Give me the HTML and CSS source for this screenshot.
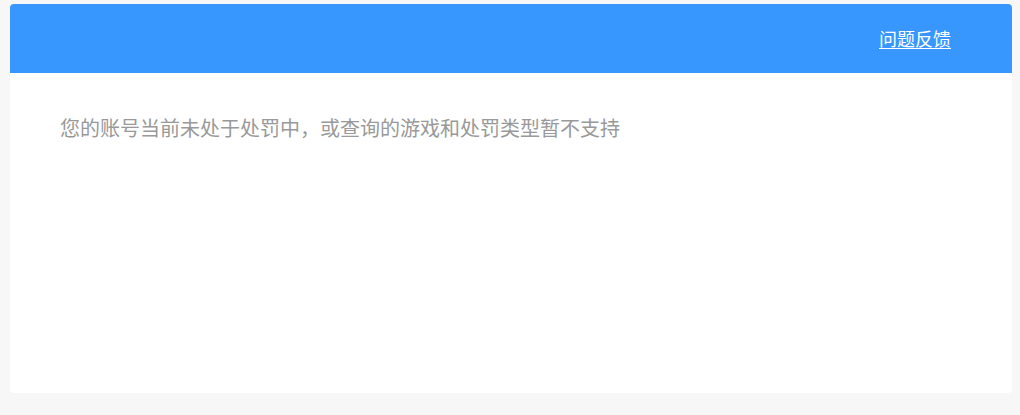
FILE: index.html
```html
<!DOCTYPE html>
<html lang="zh-CN">
<head>
<meta charset="utf-8">
<title>处罚查询</title>
<link rel="stylesheet" href="styles.css">
</head>
<body>
<div class="card">
  <div class="card-header">
    <a class="feedback" href="#">问题反馈</a>
  </div>
  <div class="card-body">
    <p class="notice">您的账号当前未处于处罚中，或查询的游戏和处罚类型暂不支持</p>
  </div>
</div>
</body>
</html>
```
FILE: styles.css
```css
html, body {
  margin: 0;
  padding: 0;
  background: #f7f7f7;
}
body {
  padding: 4px 8px 0 10px;
  font-family: "Noto Sans CJK SC", "Noto Sans", sans-serif;
}
.card {
  background: #ffffff;
  border-radius: 4px;
  height: 389px;
  overflow: hidden;
  display: flex;
  flex-direction: column;
}
.card-header {
  height: 69px;
  background: #3797ff;
  display: flex;
  align-items: center;
  justify-content: flex-end;
  padding: 0 61px 2px;
  box-sizing: border-box;
}
.feedback {
  color: #ffffff;
  font-size: 18px;
  line-height: 24px;
  text-decoration: underline;
  text-underline-offset: 2px;
}
.card-body {
  flex: 1;
  padding: 35px 50px;
}
.notice {
  margin: 0;
  font-size: 20px;
  line-height: 40px;
  color: #999999;
}
```
